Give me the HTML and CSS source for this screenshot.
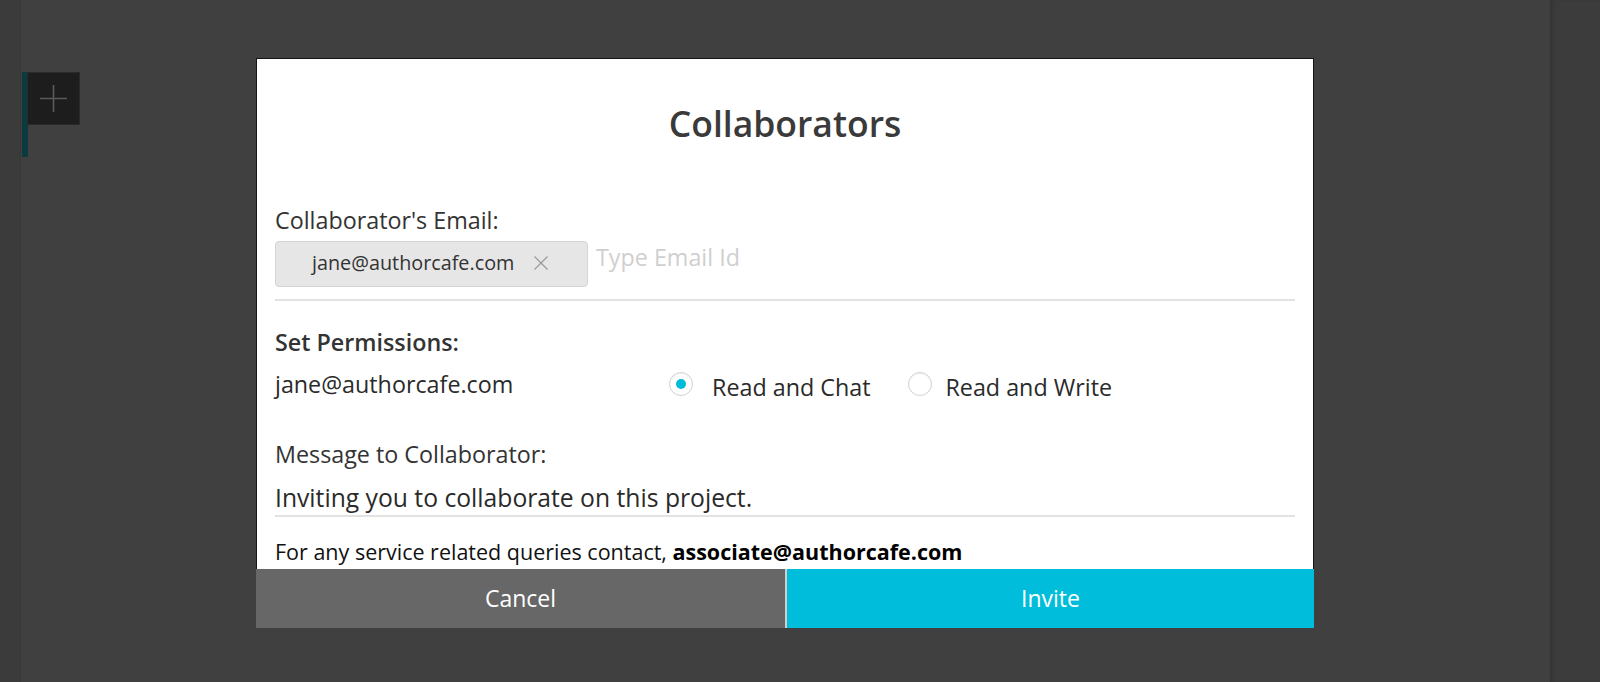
FILE: index.html
```html
<!DOCTYPE html>
<html lang="en">
<head>
<meta charset="utf-8">
<title>Collaborators</title>
<link rel="stylesheet" href="styles.css">
</head>
<body>
<div class="app">
  <aside class="rail-left"></aside>
  <main class="stage">
    <div class="add-widget">
      <span class="accent"></span>
      <button class="add-btn" aria-label="Add">
        <svg width="27" height="27" viewBox="0 0 27 27"><path d="M13.5 0V27M0 13.5H27" stroke="#5a5a5a" stroke-width="1.6" fill="none"/></svg>
      </button>
    </div>

    <div class="modal">
      <div class="modal-body">
        <h1 class="title">Collaborators</h1>

        <div class="label">Collaborator's Email:</div>
        <div class="email-row">
          <span class="chip">
            <span class="chip-text">jane@authorcafe.com</span>
            <svg class="chip-x" width="14" height="14" viewBox="0 0 14 14"><path d="M0.5 0.5L13.5 13.5M13.5 0.5L0.5 13.5" stroke="#9a9a9a" stroke-width="1.2" fill="none"/></svg>
          </span>
          <span class="placeholder">Type Email Id</span>
        </div>
        <div class="divider"></div>

        <div class="label strong perm-title">Set Permissions:</div>
        <div class="perm-row">
          <div class="perm-email">jane@authorcafe.com</div>
          <label class="option">
            <span class="radio checked"></span>
            <span class="option-text first">Read and Chat</span>
          </label>
          <label class="option">
            <span class="radio"></span>
            <span class="option-text second">Read and Write</span>
          </label>
        </div>

        <div class="label msg-label">Message to Collaborator:</div>
        <div class="message">Inviting you to collaborate on this project.</div>
        <div class="divider thin"></div>

        <p class="note">For any service related queries contact, <b>associate@authorcafe.com</b></p>
      </div>
      <div class="modal-actions">
        <button class="btn cancel">Cancel</button>
        <button class="btn invite">Invite</button>
      </div>
    </div>
  </main>
  <aside class="rail-right"></aside>
</div>
</body>
</html>
```
FILE: styles.css
```css
* { box-sizing: border-box; }
html, body { margin: 0; padding: 0; }
body {
  font-family: "Open Sans", "Noto Sans", sans-serif;
  background: #404040;
  width: 1600px;
  height: 682px;
  overflow: hidden;
}
.app { display: flex; height: 682px; }
.rail-left {
  width: 21px;
  background: #3b3b3b;
  box-shadow: inset -1px 0 0 #383838;
}
.rail-right {
  width: 50px;
  background: #3c3c3c;
  box-shadow: inset 4px 0 4px -2px rgba(0,0,0,0.18);
}
.stage {
  flex: 1;
  position: relative;
  background: #404040;
}

.add-widget {
  display: flex;
  align-items: flex-start;
  margin-top: 72px;
  margin-left: 1px;
}
.accent {
  width: 6px;
  height: 85px;
  background: #0b3a3f;
}
.add-btn {
  margin: 0 0 0 -1px;
  width: 53px;
  height: 53px;
  padding: 0;
  background: #1d1d1d;
  border: 1px solid #2a2a2a;
  display: flex;
  align-items: center;
  justify-content: center;
}
.add-btn svg { display: block; }

.modal {
  position: absolute;
  top: 58px;
  left: 235px;
  width: 1058px;
}
.modal-body {
  background: #fff;
  border: 1px solid #141414;
  border-bottom: none;
  padding: 40px 18px 3px;
  color: #333;
}
.title {
  margin: 0;
  font-size: 35.5px;
  line-height: 48px;
  font-weight: 600;
  text-align: center;
  color: #3a3a3a;
}
.label {
  font-size: 23.3px;
  line-height: 30px;
  color: #333;
  margin-top: 58px;
}
.strong { font-weight: 600; }
.email-row {
  display: flex;
  align-items: flex-start;
  margin-top: 6px;
}
.chip {
  display: inline-flex;
  align-items: center;
  width: 313px;
  height: 46px;
  padding: 0 0 4px 36px;
  background: #e6e6e6;
  border: 1px solid #d5d5d5;
  border-radius: 4px;
}
.chip-text {
  font-size: 19.8px;
  line-height: 27px;
  color: #333;
}
.chip-x { margin-left: 20px; margin-top: 2px; display: block; }
.placeholder {
  margin-left: 8px;
  margin-top: 1px;
  font-size: 23.3px;
  line-height: 30px;
  color: #cfcfcf;
}
.divider {
  height: 2px;
  background: #e2e2e2;
  margin-top: 12px;
}
.divider.thin { margin-top: 2px; }
.perm-title { margin-top: 26px; color: #333; }
.perm-row {
  display: flex;
  align-items: flex-start;
  margin-top: 12px;
}
.perm-email {
  width: 394px;
  font-size: 23.3px;
  line-height: 30px;
  color: #2a2a2a;
}
.option {
  display: flex;
  align-items: flex-start;
  margin-top: 3px;
  margin-right: 38px;
}
.radio {
  width: 24px;
  height: 24px;
  border-radius: 50%;
  border: 1.5px solid #d2d2d2;
  background: #fff;
  display: flex;
  align-items: center;
  justify-content: center;
  box-shadow: inset 0 1px 2px rgba(0,0,0,0.06);
}
.radio.checked::after {
  content: "";
  width: 10px;
  height: 10px;
  border-radius: 50%;
  background: #00bcd8;
}
.option-text {
  font-size: 23.3px;
  line-height: 30px;
  color: #2a2a2a;
}
.option-text.first { margin-left: 19px; }
.option-text.second { margin-left: 13px; }
.msg-label { margin-top: 37px; }
.message {
  margin-top: 14px;
  font-size: 24.7px;
  line-height: 30px;
  color: #2a2a2a;
}
.note {
  margin: 21px 0 0;
  font-size: 21.5px;
  line-height: 28px;
  color: #111;
}
.note b { font-weight: 700; color: #000; }

.modal-actions {
  display: flex;
  height: 59px;
}
.btn {
  border: none;
  margin: 0;
  padding: 0;
  font-family: "Open Sans", "Noto Sans", sans-serif;
  font-size: 23px;
  line-height: 59px;
  color: #fff;
  text-align: center;
}
.btn.cancel { width: 529px; background: #676767; }
.btn.invite { flex: 1; background: #00bedb; border-left: 2px solid #cfcfcf; }
```
